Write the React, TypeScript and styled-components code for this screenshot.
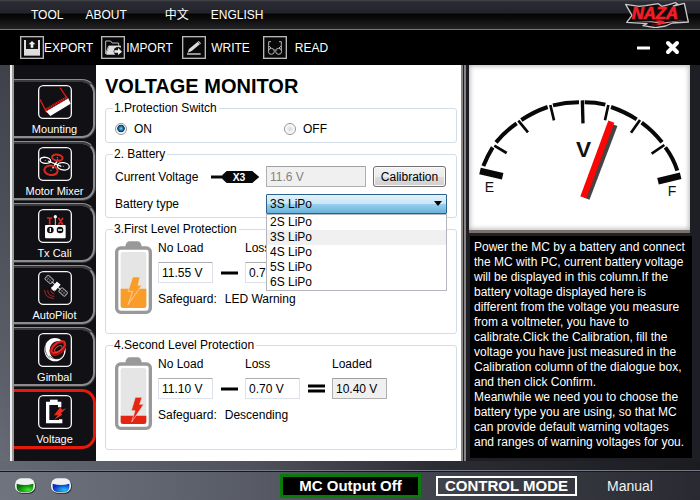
import React, { useState } from "react";
import styled, { createGlobalStyle, css } from "styled-components";

const GlobalStyle = createGlobalStyle`
  *, *::before, *::after { box-sizing: border-box; }
  body { margin: 0; background: #000; }
  button, input, select { font: inherit; }
`;

const Page = styled.div`
  display: flex;
  flex-direction: column;
  min-height: 100vh;
  font-family: "Liberation Sans", "Noto Sans CJK SC", Arial, sans-serif;
  font-size: 12px;
  line-height: 14px;
  color: #000;
  background: linear-gradient(225deg, #24262d 0%, #24262d 40%, #5c606a 90%, #6c717b 100%);
`;

const plainButton = css`
  border: 0;
  padding: 0;
  background: none;
  color: #fff;
  cursor: pointer;
`;

const MenuBar = styled.nav`
  display: flex;
  align-items: center;
  height: 30px;
  padding: 0 11px 0 31px;
  border-bottom: 1px solid #77777a;
  background: linear-gradient(#45464c 0, #2b2c33 2px, #23242b 13px, #050506 14px, #0a0a0b 18px, #232325 100%);
`;

const MenuButton = styled.button<{ $before?: number }>`
  ${plainButton}
  margin-left: ${(p) => p.$before ?? 0}px;
`;

const Logo = styled.svg`
  width: 64px;
  height: 26px;
  margin-left: auto;
`;

const Toolbar = styled.div`
  display: flex;
  align-items: center;
  gap: 8px;
  height: 35px;
  padding: 0 19px 0 20px;
  background: #000;
`;

const ToolButton = styled.button`
  ${plainButton}
  display: grid;
  grid-template-columns: 24px 49px;
  align-items: center;
  text-align: center;

  svg { width: 24px; height: 23px; }
`;

const WindowControls = styled.div`
  display: flex;
  gap: 12px;
  margin-left: auto;
`;

const WindowButton = styled.button`
  ${plainButton}
  width: 17px;
  height: 17px;

  svg { display: block; width: 17px; height: 17px; }
`;

const Body = styled.div`
  display: grid;
  grid-template-columns: 82px minmax(0, 1fr) 239px;
  flex: 1;
  padding-left: 10px;
`;

const Sidebar = styled.nav`
  display: flex;
  flex-direction: column;
  gap: 2px;
  width: 86px;
  padding-top: 14px;
  border-left: 4px ridge #eee;
  background: #101015;
`;

const Tab = styled.button<{ $active?: boolean }>`
  ${plainButton}
  display: flex;
  flex-direction: column;
  align-items: center;
  gap: 3px;
  height: 60px;
  padding: 3px 0 0 2px;
  font-size: 11px;
  border: 3px ${(p) => (p.$active ? "solid #e31a0c" : "ridge #8d8d90")};
  border-left: 0;
  border-radius: 0 14px 14px 0;
  background: #101015;

  svg { width: 34px; height: 34px; flex: none; }
`;

const Main = styled.main`
  padding: 9px 4px 7px 9px;
  margin-left: 4px;
  background: #fff;
`;

const Title = styled.h1`
  margin: 0 0 3px;
  font-size: 20px;
  line-height: 24px;
`;

const Group = styled.fieldset<{ $height: number }>`
  display: block;
  min-width: 0;
  min-height: ${(p) => p.$height}px;
  margin: 0 0 4px;
  padding: 0 9px;
  border: 1px solid #d3dde6;
  border-radius: 3px;

  legend { padding: 0 2px 0 1px; margin-left: -2px; line-height: 14px; }
`;

const RadioRow = styled.div`
  display: grid;
  grid-template-columns: 169px 1fr;
  padding-top: 7px;
`;

const RadioLabel = styled.label`
  display: flex;
  align-items: center;
  gap: 7px;
`;

const Radio = styled.input`
  appearance: none;
  width: 12px;
  height: 12px;
  margin: 0;
  border: 1px solid #909498;
  border-radius: 50%;
  background: radial-gradient(circle, #d8dadc 0, #eeeff0 45%, #fff 60%);

  &:checked {
    background: radial-gradient(circle at 50% 45%, #7bd3f5 0, #1676aa 28%, #0b3756 46%, #fff 56%);
  }
`;

const BatteryGrid = styled.div`
  display: grid;
  grid-template-columns: 96px 55px minmax(0, 1fr) 81px;
  row-gap: 7px;
  align-items: center;
  padding-top: 5px;
`;

const Plug = styled.svg`
  width: 49px;
  height: 14px;
`;

const Field = styled.input<{ $muted?: boolean }>`
  min-width: 0;
  width: 100%;
  height: 21px;
  padding: 0 3px;
  border: 1px solid ${(p) => (p.$muted ? "#afafaf" : "#dde2ea")};
  border-top-color: ${(p) => (p.$muted ? "#a0a0a0" : "#abadb3")};
  border-radius: 1px;
  background: ${(p) => (p.$muted ? "#f0f0f0" : "#fff")};
  color: #000;

  &:disabled { color: #838383; opacity: 1; }
`;

const Calibrate = styled.button`
  height: 21px;
  margin: 0 1px 0 7px;
  padding: 0;
  border: 1px solid #707070;
  border-radius: 3px;
  background: linear-gradient(#f2f2f2 0, #ebebeb 50%, #dddddd 51%, #cfcfcf 100%);
  box-shadow: inset 0 0 0 1px #fafafa;
  color: #000;
`;

const Combo = styled.div`
  position: relative;
  grid-column: 3 / 5;

  > svg {
    position: absolute;
    top: 7px;
    right: 5px;
    width: 8px;
    height: 5px;
    pointer-events: none;
  }
`;

const Select = styled.select`
  display: block;
  appearance: none;
  width: 100%;
  height: 20px;
  padding: 0 3px;
  border: 1px solid #2c628b;
  border-radius: 1px;
  background: linear-gradient(#e3f2fb 0, #c7e5f6 50%, #98d0ee 51%, #68b3db 100%);
  color: #000;
`;

const Options = styled.ul`
  position: absolute;
  top: 100%;
  left: 0;
  right: 0;
  z-index: 2;
  margin: 0;
  padding: 0;
  border: 1px solid #b4b5bd;
  background: #fff;
  list-style: none;
`;

const Option = styled.li<{ $selected: boolean }>`
  padding: 0 3px;
  line-height: 15px;
  background: ${(p) => (p.$selected ? "#f0f0f0" : "#fff")};
`;

const LevelRow = styled.div`
  display: grid;
  grid-template-columns: 37px minmax(0, 1fr);
  column-gap: 6px;
  padding-top: 5px;
`;

const BatteryIcon = styled.svg`
  width: 37px;
  height: 73px;
`;

const Formula = styled.div`
  display: grid;
  grid-template-columns: 55px 32px 55px 32px 55px;
  align-items: center;
  row-gap: 7px;

  svg { width: 17px; height: 9px; justify-self: center; }
`;

const Safeguard = styled.p`
  display: flex;
  gap: 8px;
  margin: 9px 0 0;
`;

const Side = styled.aside`
  display: flex;
  flex-direction: column;
  padding: 0 8px 3px 3px;
  border-left: 5px double #8a8585;
  background: #1e1f25;
`;

const GaugePanel = styled.div`
  margin-right: 2px;
  border-bottom: 6px ridge #777170;
  background: #fff;
  box-shadow: inset 0 0 5px 1px #b5b5b5;

  svg { display: block; width: 100%; height: auto; }
`;

const Help = styled.div`
  flex: 1;
  padding: 4px 3px 6px 4px;
  margin-left: 1px;
  background: #000;
  color: #fff;
  line-height: 15px;

  p { margin: 0; }
`;

const StatusBar = styled.footer`
  display: flex;
  align-items: center;
  height: 29px;
  padding-left: 15px;
  border-top: 1px solid #16171b;
  background: linear-gradient(90deg, #6f747e 0, #595c66 35%, #42444e 60%, #292a31 100%);
`;

const StatusEdge = styled.div`
  height: 10px;
  border-bottom: 1px solid #777984;
  background: linear-gradient(90deg, #646973 0, #50535d 35%, #2c2d34 62%, #1b1c20 100%);
`;

const Led = styled.svg`
  width: 21px;
  height: 16px;
  margin-right: 15px;
`;

const OutputState = styled.output`
  margin-left: auto;
  width: 141px;
  border: 3px solid #087c08;
  background: #000;
  color: #fff;
  font-size: 15px;
  font-weight: bold;
  line-height: 18px;
  text-align: center;
`;

const ModeTitle = styled.span`
  width: 141px;
  margin-left: 15px;
  border: 2px solid #fff;
  color: #fff;
  font-size: 15px;
  font-weight: bold;
  line-height: 16px;
  text-align: center;
`;

const ModeValue = styled.span`
  width: 93px;
  margin-left: 30px;
  color: #f2f2f2;
  font-size: 14px;
  line-height: 16px;
`;

/* ---------- drawings ---------- */

const IconFrame = ({ children }: { children: React.ReactNode }) => (
  <svg viewBox="0 0 102 102" aria-hidden="true">
    <rect x="2" y="2" width="98" height="98" rx="14" fill="#101015" stroke="#f4f4f4" strokeWidth="4" />
    {children}
  </svg>
);

const MountingIcon = () => (
  <IconFrame>
    <path d="M6 43 L26 82 M66 8 L89 42" stroke="#e01b16" strokeWidth="4" fill="none" />
    <path d="M24 79 L91 40 L98 56 L37 93 Z" fill="#fff" />
    <path d="M24 75 L87 37" stroke="#e01b16" strokeWidth="9" strokeDasharray="4 2" />
  </IconFrame>
);

const MotorIcon = () => (
  <IconFrame>
    <g fill="none" strokeWidth="4">
      <path d="M30 42 L70 58 M60 38 L44 64" stroke="#fff" />
      <ellipse cx="22" cy="40" rx="16" ry="9" stroke="#fff" transform="rotate(8 22 40)" />
      <ellipse cx="76" cy="58" rx="18" ry="11" stroke="#fff" transform="rotate(8 76 58)" />
      <ellipse cx="58" cy="32" rx="16" ry="9" stroke="#d82820" strokeWidth="6" transform="rotate(8 58 32)" />
      <ellipse cx="39" cy="70" rx="20" ry="14" stroke="#d82820" strokeWidth="6" transform="rotate(8 39 70)" />
    </g>
    <g fill="#999"><circle cx="22" cy="40" r="2" /><circle cx="76" cy="58" r="2" /><circle cx="58" cy="32" r="2" /><circle cx="39" cy="70" r="2" /></g>
  </IconFrame>
);

const TxIcon = () => (
  <IconFrame>
    <path d="M27 27 H43 M35 27 V47 M61 26 L75 47 M75 26 L61 47" stroke="#d4251e" strokeWidth="5" fill="none" />
    <path d="M52 24 V50" stroke="#ccc" strokeWidth="3" />
    <circle cx="52" cy="23" r="5" fill="#fff" />
    <rect x="21" y="48" width="62" height="40" rx="3" fill="#fff" />
    <circle cx="37" cy="63" r="10" fill="#111" /><circle cx="66" cy="63" r="10" fill="#111" />
    <path d="M37 57 V69 M60 63 H72" stroke="#fff" strokeWidth="4" />
  </IconFrame>
);

const SatelliteIcon = () => (
  <IconFrame>
    <g transform="rotate(42 54 45)">
      <rect x="14" y="36" width="24" height="16" rx="3" fill="none" stroke="#a2a2a2" strokeWidth="3" />
      <path d="M22 36 V52 M30 36 V52 M14 44 H38 M78 36 V52 M86 36 V52 M70 44 H94" stroke="#777" strokeWidth="2" />
      <rect x="70" y="36" width="24" height="16" rx="3" fill="none" stroke="#a2a2a2" strokeWidth="3" />
      <path d="M38 44 H70" stroke="#ddd" strokeWidth="3" />
      <rect x="47" y="33" width="15" height="24" fill="#fff" />
    </g>
    <path d="M40 48 Q50 50 50 62 L40 54 Z" fill="#fff" />
    <path d="M38 58 Q39 68 49 69 M29 58 Q30 76 49 76 M20 57 Q21 82 48 82" fill="none" stroke="#b9211b" strokeWidth="3" />
  </IconFrame>
);

const GimbalIcon = () => (
  <IconFrame>
    <ellipse cx="51" cy="50" rx="32" ry="35" fill="#fff" />
    <ellipse cx="57" cy="52" rx="22" ry="27" fill="#111" />
    <path d="M25 24 Q13 57 36 77 M34 69 Q51 85 73 70" stroke="#333" strokeWidth="2" fill="none" />
    <ellipse cx="60" cy="46" rx="24" ry="15" fill="#111" stroke="#a90e0d" strokeWidth="8" transform="rotate(-38 60 46)" />
    <ellipse cx="61" cy="42" rx="24" ry="12" fill="none" stroke="#ef2620" strokeWidth="5" transform="rotate(-38 61 42)" />
    <ellipse cx="61" cy="48" rx="13" ry="7" fill="none" stroke="#e9423c" strokeWidth="3" transform="rotate(-38 61 48)" />
  </IconFrame>
);

const VoltageIcon = () => (
  <IconFrame>
    <path d="M65 37 V25 H29 V80 H68 V73" fill="none" stroke="#fff" strokeWidth="10" />
    <rect x="36" y="14" width="23" height="11" fill="#fff" />
    <path d="M67 36 L48 61 L60 61 L47 76 L73 59 L69 55 L85 40 L72 44 Z" fill="#ee2a1c" />
  </IconFrame>
);

const ToolFrame = ({ children }: { children: React.ReactNode }) => (
  <svg viewBox="0 0 72 69" aria-hidden="true">
    <rect x="2" y="2" width="68" height="65" fill="#080808" stroke="#b9b9b9" strokeWidth="4" />
    {children}
  </svg>
);

const ExportIcon = () => (
  <ToolFrame>
    <path d="M12 12 H60 V59 H12 Z" fill="#ddd" />
    <rect x="18" y="12" width="36" height="27" fill="#111" />
    <path d="M36 15 L46 25 H40 V35 H32 V25 H26 Z" fill="#eee" />
  </ToolFrame>
);

const ImportIcon = () => (
  <ToolFrame>
    <path d="M14 54 V15 H29 L33 21 H53 V30 M14 54 L23 30 H59" fill="none" stroke="#bbb" strokeWidth="3" />
    <path d="M16 53 L24 30 H60 L54 56 H16 Z" fill="#ddd" />
    <circle cx="51" cy="46" r="13" fill="#111" />
    <path d="M40 43 H51 V36 L63 47 L51 57 V50 H40 Z" fill="#eee" />
  </ToolFrame>
);

const WriteIcon = () => (
  <ToolFrame>
    <path d="M17 50 L21 39 L50 15 L57 22 L29 45 Z" fill="#ddd" />
    <path d="M47 17 L55 25" stroke="#222" strokeWidth="2" />
    <path d="M15 54 H56" stroke="#ddd" strokeWidth="4" />
  </ToolFrame>
);

const ReadIcon = () => (
  <ToolFrame>
    <g fill="none" stroke="#b8b8b8" strokeWidth="3">
      <circle cx="25" cy="46" r="9" /><circle cx="47" cy="46" r="9" />
      <path d="M34 43 Q36 39 38 43 M24 17 H17 V29 L24 36 M48 17 H55 V29 L48 36 M17 30 V43 M55 30 V43" />
    </g>
  </ToolFrame>
);

const NazaLogo = () => (
  <Logo viewBox="0 0 192 78" role="img" aria-label="NAZA">
    <path d="M2 7 L42 13 L62 11 L100 5 L110 13 L132 8 L151 2 L158 6 L145 12 L178 4 L190 60 L142 63 L122 72 L92 77 L54 71 L66 65 L5 61 L21 40 Z" fill="#100b0d" stroke="#c9c9c9" strokeWidth="4" strokeLinejoin="round" />
    <path d="M23 60 L80 58 L109 62 L179 54 L110 66 L79 61 Z" fill="#e8a09f" />
    <text x="20" y="51" fontFamily="Liberation Sans, Arial, sans-serif" fontSize="50" fontWeight="bold" fontStyle="italic" fill="#f51d27" stroke="#f51d27" strokeWidth="2">NAZA</text>
    <path d="M88 56 Q117 52 120 61 Q108 74 76 68 Q104 69 105 62 Z" fill="#f51d27" />
  </Logo>
);

const Battery = ({ level, color }: { level: "first" | "second"; color: string }) => {
  const top = level === "first" ? 143 : 176;
  return (
    <BatteryIcon viewBox="0 0 111 219" aria-hidden="true">
      <path d="M31 18 Q32 1 45 1 H67 Q79 1 80 18" fill="#999" />
      <rect x="5" y="21" width="101" height="193" rx="12" fill="#fff" stroke="#999" strokeWidth="10" />
      <rect x="17" y="33" width="77" height="168" rx="7" fill="#e5e5e5" />
      <path d={`M17 ${top} H94 V194 Q94 201 87 201 H24 Q17 201 17 194 Z`} fill={color} />
      {level === "first" ? (
        <path d="M53 108 H75 L69 133 H80 L39 191 L53 151 H39 Z" fill={color} stroke="#f6e4ca" strokeWidth="2" />
      ) : (
        <path d="M61 121 H81 L74 142 H86 L50 195 L60 161 H49 Z" fill={color} stroke="#e5d6d4" strokeWidth="2" />
      )}
    </BatteryIcon>
  );
};

const arcs = [
  "M70 318 Q82 288 98 262",
  "M108 247 Q136 214 170 190",
  "M184 180 Q222 155 263 141",
  "M279 136 Q316 127 357 127",
  "M374 127 Q407 127 436 134",
  "M453 141 Q494 155 530 178",
  "M545 188 Q579 213 606 247",
  "M616 262 Q640 294 652 332",
];

const Gauge = () => (
  <svg viewBox="27 15 663 495" role="img" aria-label="Voltage gauge">
    <g fill="none" stroke="#080808">
      {arcs.map((d) => <path key={d} d={d} strokeWidth="12" />)}
      <path d="M103 257 L140 279 M175 182 L204 217 M271 135 L282 181 M445 135 L435 181 M540 180 L513 218 M613 255 L575 281" strokeWidth="8" />
      <path d="M367 121 L369 190" strokeWidth="10" />
      <path d="M60 333 L128 349 M594 364 L662 347" strokeWidth="20" />
    </g>
    <g fontFamily="Liberation Sans, Arial, sans-serif" fill="#111">
      <text x="88" y="396" fontSize="42" textAnchor="middle">E</text>
      <text x="636" y="407" fontSize="42" textAnchor="middle">F</text>
      <text x="371" y="290" fontSize="68" fontWeight="bold" textAnchor="middle">V</text>
    </g>
    <path d="M380 416 L464 195" stroke="#444" strokeWidth="18" />
    <path d="M370 412 L454 185" stroke="#fb0505" strokeWidth="19" />
  </svg>
);

const StatusLed = ({ name, light, dark }: { name: string; light: string; dark: string }) => (
  <Led viewBox="0 0 63 48" role="img" aria-label={name}>
    <defs>
      <radialGradient id={name} cx="0.7" cy="0.75" r="0.7">
        <stop offset="0" stopColor={light} /><stop offset="1" stopColor={dark} />
      </radialGradient>
    </defs>
    <rect x="2" y="3" width="60" height="44" rx="19" fill="#25272b" />
    <rect x="0" y="1" width="60" height="43" rx="19" fill="#eef1f0" />
    <path d="M5 17 Q30 25 55 17 V26 Q55 42 38 42 H22 Q5 42 5 26 Z" fill={`url(#${name})`} />
  </Led>
);

const Minus = () => <svg viewBox="0 0 17 9" aria-hidden="true"><path d="M0 5 H17" stroke="#000" strokeWidth="3" /></svg>;
const Equals = () => <svg viewBox="0 0 17 9" aria-hidden="true"><path d="M0 2 H17 M0 7 H17" stroke="#000" strokeWidth="3" /></svg>;

/* ---------- page ---------- */

const tabs = [
  { name: "Mounting", Icon: MountingIcon },
  { name: "Motor Mixer", Icon: MotorIcon },
  { name: "Tx Cali", Icon: TxIcon },
  { name: "AutoPilot", Icon: SatelliteIcon },
  { name: "Gimbal", Icon: GimbalIcon },
  { name: "Voltage", Icon: VoltageIcon },
];

const tools = [
  { name: "EXPORT", Icon: ExportIcon },
  { name: "IMPORT", Icon: ImportIcon },
  { name: "WRITE", Icon: WriteIcon },
  { name: "READ", Icon: ReadIcon },
];

const batteryTypes = ["2S LiPo", "3S LiPo", "4S LiPo", "5S LiPo", "6S LiPo"];

type LevelProps = {
  id: "first" | "second";
  title: string;
  color: string;
  noLoad: string;
  loss: string;
  loaded?: string;
  action: string;
};

const ProtectionLevel = ({ id, title, color, noLoad, loss, loaded, action }: LevelProps) => (
  <Group $height={112}>
    <legend>{title}</legend>
    <LevelRow>
      <Battery level={id} color={color} />
      <div>
        <Formula>
          <label htmlFor={`${id}-noload`}>No Load</label><span />
          <label htmlFor={`${id}-loss`}>Loss</label><span />
          {loaded ? <label htmlFor={`${id}-loaded`}>Loaded</label> : <span />}
          <Field id={`${id}-noload`} defaultValue={noLoad} />
          <Minus />
          <Field id={`${id}-loss`} defaultValue={loss} />
          {loaded && <Equals />}
          {loaded && <Field id={`${id}-loaded`} value={loaded} readOnly $muted />}
        </Formula>
        <Safeguard><span>Safeguard:</span><span>{action}</span></Safeguard>
      </div>
    </LevelRow>
  </Group>
);

export default function App() {
  const [battery, setBattery] = useState("3S LiPo");

  return (
    <Page>
      <GlobalStyle />
      <MenuBar>
        <MenuButton>TOOL</MenuButton>
        <MenuButton $before={22}>ABOUT</MenuButton>
        <MenuButton $before={38} lang="zh">中文</MenuButton>
        <MenuButton $before={22}>ENGLISH</MenuButton>
        <NazaLogo />
      </MenuBar>

      <Toolbar>
        {tools.map(({ name, Icon }) => (
          <ToolButton key={name}><Icon /><span>{name}</span></ToolButton>
        ))}
        <WindowControls>
          <WindowButton aria-label="Minimize">
            <svg viewBox="0 0 17 17"><path d="M2 9 H15" stroke="#fff" strokeWidth="3" /></svg>
          </WindowButton>
          <WindowButton aria-label="Close">
            <svg viewBox="0 0 17 17"><path d="M4 4 L13 13 M13 4 L4 13" stroke="#fff" strokeWidth="4" strokeLinecap="round" /></svg>
          </WindowButton>
        </WindowControls>
      </Toolbar>

      <Body>
        <Sidebar>
          {tabs.map(({ name, Icon }) => (
            <Tab key={name} $active={name === "Voltage"}><Icon /><span>{name}</span></Tab>
          ))}
        </Sidebar>

        <Main>
          <Title>VOLTAGE MONITOR</Title>

          <Group $height={42}>
            <legend>1.Protection Switch</legend>
            <RadioRow>
              <RadioLabel><Radio type="radio" name="protection" defaultChecked />ON</RadioLabel>
              <RadioLabel><Radio type="radio" name="protection" />OFF</RadioLabel>
            </RadioRow>
          </Group>

          <Group $height={71}>
            <legend>2. Battery</legend>
            <BatteryGrid>
              <label htmlFor="current-voltage">Current Voltage</label>
              <Plug viewBox="0 0 147 42" aria-hidden="true">
                <path d="M0 21 H40" stroke="#080808" strokeWidth="9" />
                <path d="M34 15 L47 3 H124 L145 21 L124 39 H47 L34 27 Z" fill="#080808" />
                <text x="84" y="32" fontFamily="Liberation Sans, Arial, sans-serif" fontSize="31" fontWeight="bold" fill="#fff" textAnchor="middle">X3</text>
              </Plug>
              <Field id="current-voltage" value="11.6 V" disabled readOnly $muted />
              <Calibrate>Calibration</Calibrate>

              <label htmlFor="battery-type">Battery type</label>
              <span />
              <Combo>
                <Select id="battery-type" value={battery} onChange={(e) => setBattery(e.target.value)}>
                  {batteryTypes.map((type) => <option key={type}>{type}</option>)}
                </Select>
                <svg viewBox="0 0 8 5" aria-hidden="true"><path d="M0 0 H8 L4 5 Z" fill="#000" /></svg>
                <Options role="listbox" aria-label="Battery type">
                  {batteryTypes.map((type) => (
                    <Option
                      key={type}
                      role="option"
                      aria-selected={type === battery}
                      $selected={type === battery}
                      onClick={() => setBattery(type)}
                    >
                      {type}
                    </Option>
                  ))}
                </Options>
              </Combo>
            </BatteryGrid>
          </Group>

          <ProtectionLevel id="first" title="3.First Level Protection" color="#fa9d28" noLoad="11.55 V" loss="0.70 V" action="LED Warning" />
          <ProtectionLevel id="second" title="4.Second Level Protection" color="#e62412" noLoad="11.10 V" loss="0.70 V" loaded="10.40 V" action="Descending" />
        </Main>

        <Side>
          <GaugePanel><Gauge /></GaugePanel>
          <Help>
            <p>
              Power the MC by a battery and connect the MC with PC, current battery voltage will be displayed in
              this column.If the battery voltage displayed here is different from the voltage you measure from a
              voltmeter, you have to calibrate.Click the Calibration, fill the voltage you have just measured in the
              Calibration column of the dialogue box, and then click Confirm.
            </p>
            <p>
              Meanwhile we need you to choose the battery type you are using, so that MC can provide default
              warning voltages and ranges of warning voltages for you.
            </p>
          </Help>
        </Side>
      </Body>

      <StatusEdge />
      <StatusBar>
        <StatusLed name="connected" light="#31f024" dark="#076b05" />
        <StatusLed name="signal" light="#16c7ff" dark="#1029c4" />
        <OutputState>MC Output Off</OutputState>
        <ModeTitle>CONTROL MODE</ModeTitle>
        <ModeValue>Manual</ModeValue>
      </StatusBar>
    </Page>
  );
}
